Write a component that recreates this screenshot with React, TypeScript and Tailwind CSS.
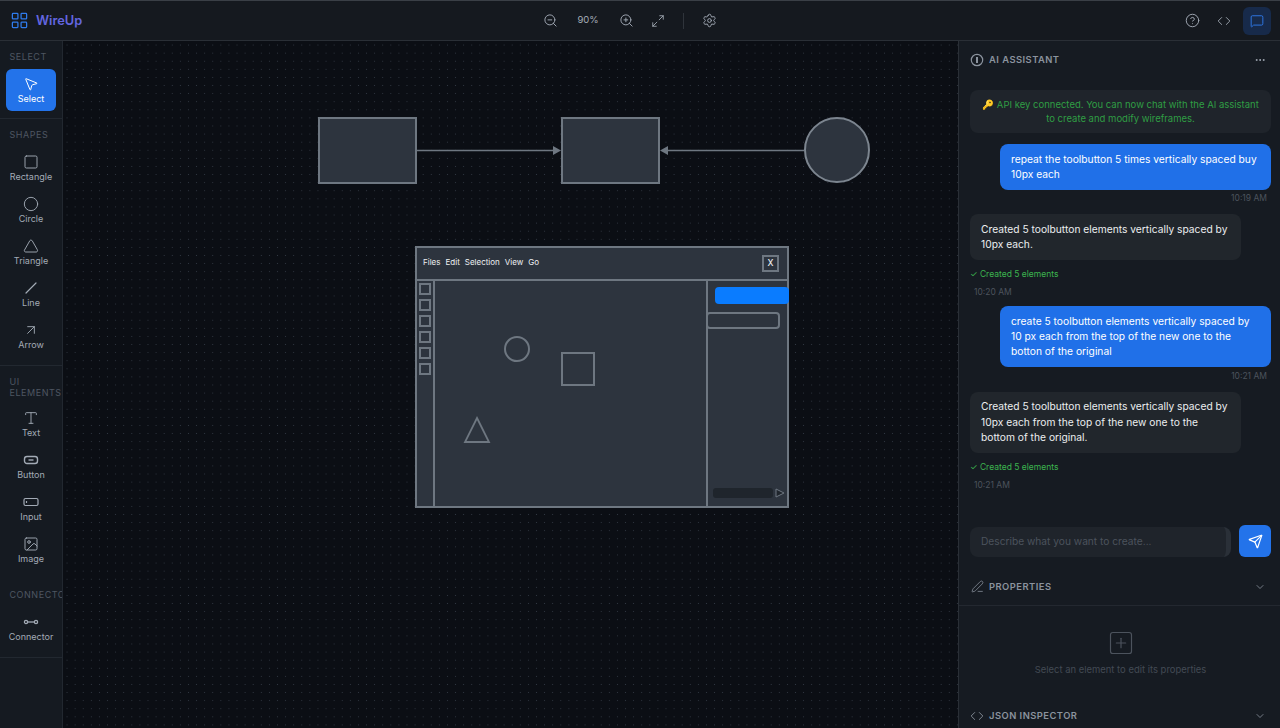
import {
  ArrowUpRight,
  ChevronDown,
  Circle,
  CircleHelp,
  Code,
  Ellipsis,
  Image,
  LayoutGrid,
  Maximize2,
  MessageSquare,
  MousePointer2,
  PenLine,
  Send,
  Settings,
  Square,
  SquarePlus,
  Triangle,
  Type,
  ZoomIn,
  ZoomOut
} from 'lucide-react';
import type { ReactNode } from 'react';

function LineIcon() {
  return (
    <svg width="16" height="16" viewBox="0 0 16 16" fill="none" stroke="currentColor" strokeWidth="1.2" strokeLinecap="round">
      <path d="M3 13 13 3" />
    </svg>
  );
}

function ButtonIcon() {
  return (
    <svg width="16" height="16" viewBox="0 0 16 16" fill="none" stroke="currentColor" strokeWidth="1.4">
      <rect x="1.5" y="4.5" width="13" height="7" rx="2.5" />
      <path d="M5.5 8h5" />
    </svg>
  );
}

function InputIcon() {
  return (
    <svg width="16" height="16" viewBox="0 0 16 16" fill="none" stroke="currentColor" strokeWidth="1.2">
      <rect x="1" y="4.5" width="14" height="7" rx="1.5" />
      <path d="M3.5 7v2" />
    </svg>
  );
}

function ConnectorIcon() {
  return (
    <svg width="16" height="16" viewBox="0 0 16 16" fill="none" stroke="currentColor" strokeWidth="1.3">
      <circle cx="3" cy="8" r="1.6" />
      <circle cx="13" cy="8" r="1.6" />
      <path d="M4.6 8h6.8" />
    </svg>
  );
}

function InfoBarIcon() {
  return (
    <svg width="14" height="14" viewBox="0 0 14 14" fill="none" stroke="currentColor">
      <circle cx="7" cy="7" r="5.7" strokeWidth="1.2" />
      <path d="M7 4v6" strokeWidth="2" />
    </svg>
  );
}

function Tool({ icon, label, active }: { icon: ReactNode; label: string; active?: boolean }) {
  return (
    <div
      className={
        active
          ? 'mx-1.5 flex h-[42px] w-[50px] flex-col items-center justify-center gap-px rounded-md bg-[#2373ea] text-white'
          : 'mx-1.5 flex h-[42px] w-[50px] flex-col items-center justify-center gap-px rounded-md text-[#a3abb6]'
      }
    >
      <div className="flex h-4 items-center justify-center">{icon}</div>
      <span className="text-[9px] leading-3">{label}</span>
    </div>
  );
}

function SectionLabel({ children }: { children: ReactNode }) {
  return <div className="px-[9.5px] text-[9px] leading-[11px] tracking-[0.06em] whitespace-pre-wrap text-[#4e5662]">{children}</div>;
}

function ChatUser({ lines, time }: { lines: string[]; time: string }) {
  return (
    <div className="flex flex-col items-end">
      <div className="w-[271px] rounded-lg bg-[#2070e8] px-[11px] py-[7.5px] text-[10.25px] leading-[15.4px] whitespace-nowrap text-white">
        {lines.map((line) => (
          <div key={line}>{line}</div>
        ))}
      </div>
      <div className="mt-[2.5px] pr-1 text-[8.5px] leading-3 text-[#4c535d]">{time}</div>
    </div>
  );
}

function ChatBot({ lines, time }: { lines: string[]; time: string }) {
  return (
    <div className="flex flex-col items-start">
      <div className="w-[271px] rounded-lg bg-[#21262c] px-[11px] py-[7.5px] text-[10.25px] leading-[15.4px] whitespace-nowrap text-[#eceef0]">
        {lines.map((line) => (
          <div key={line}>{line}</div>
        ))}
      </div>
      <div className="mt-[8px] text-[8.5px] leading-3 text-[#3cb54f]">✓ Created 5 elements</div>
      <div className="mt-[6px] pl-1 text-[8.5px] leading-3 text-[#4c535d]">{time}</div>
    </div>
  );
}

function PanelHeader({ icon, title, right }: { icon: ReactNode; title: string; right: ReactNode }) {
  return (
    <div className="flex items-center justify-between pr-[5px] text-[#8b939e]">
      <div className="flex items-center gap-[5px]">
        <div className="flex w-[14px] justify-center">{icon}</div>
        <span className="text-[9.4px] leading-3 font-semibold tracking-[0.05em]">{title}</span>
      </div>
      {right}
    </div>
  );
}

const shape = 'absolute border-2 border-[#6e7781] bg-[#2d343e]';

function Canvas() {
  return (
    <div className="relative h-full flex-1 overflow-hidden bg-[#0b0e14] bg-[radial-gradient(#323944_0.8px,transparent_0.9px)] bg-[size:8.1px_8.1px]">
      <div className={`${shape} top-[76px] left-[255px] h-[67px] w-[99px]`} />
      <div className={`${shape} top-[76px] left-[498px] h-[67px] w-[99px]`} />
      <div className={`${shape} top-[76px] left-[741px] h-[66px] w-[66px] rounded-full border-[#7c858f]`} />
      <svg className="absolute top-[100px] left-[350px]" width="460" height="20" fill="none">
        <path d="M4 9.5h140M391 9.5H251" stroke="#6e7781" strokeWidth="1.6" />
        <path d="M140 5l8 4.5-8 4.5zM255 5l-8 4.5 8 4.5z" fill="#6e7781" />
      </svg>

      <div className="absolute top-[205px] left-[352px] flex h-[262px] w-[374px] flex-col border-2 border-[#6e7781] bg-[#2d343e]">
        <div className="flex h-[33px] items-center justify-between border-b-2 border-[#6e7781] pr-[8px] pl-[6px]">
          <div className="flex gap-[5px] pb-[3px] text-[8px] text-[#eef0f2]">
            <span>Files</span>
            <span>Edit</span>
            <span>Selection</span>
            <span>View</span>
            <span>Go</span>
          </div>
          <div className="flex h-[17px] w-[17px] items-center justify-center border-2 border-[#6e7781] text-[8.5px] font-medium text-[#eef0f2]">
            X
          </div>
        </div>
        <div className="flex flex-1">
          <div className="flex w-[18px] flex-col items-center gap-[4.2px] border-r-2 border-[#6e7781] pt-[1.5px] pr-[1px]">
            {[0, 1, 2, 3, 4, 5].map((n) => (
              <div key={n} className="h-3 w-3 border-2 border-[#6e7781]" />
            ))}
          </div>
          <div className="relative flex-1">
            <div className="absolute top-[55px] left-[69px] h-[26px] w-[26px] rounded-full border-2 border-[#6e7781]" />
            <div className="absolute top-[71px] left-[126px] h-[34px] w-[34px] border-2 border-[#6e7781]" />
            <svg className="absolute top-[135px] left-[28px]" width="28" height="28" fill="none">
              <path d="M14 2 26 26H2z" stroke="#6e7781" strokeWidth="1.8" />
            </svg>
          </div>
          <div className="relative w-[81px] border-l-2 border-[#6e7781]">
            <div className="absolute top-[6px] right-[-2px] h-[17px] w-[74px] rounded-[4px] bg-[#0a7cff]" />
            <div className="absolute top-[31px] left-[-2px] h-[17px] w-[74px] rounded-[4px] border-2 border-[#6e7781]" />
            <div className="absolute top-[207px] left-[5px] h-[10px] w-[60px] rounded-[3px] bg-[#1f252c]" />
            <svg className="absolute top-[207px] left-[67px]" width="10" height="10">
              <path d="M1 1l8 4-8 4z" fill="#1f252c" stroke="#6e7781" />
            </svg>
          </div>
        </div>
      </div>
    </div>
  );
}

export default function App() {
  return (
    <div className="flex h-[728px] w-[1280px] flex-col overflow-hidden bg-[#0b0e14] font-['Inter',sans-serif]">
      <header className="flex h-[41px] shrink-0 items-center justify-between border-t border-b border-t-[#3a3f46] border-b-[#2a2f36] bg-[#15191f] pr-[9px] pl-[10px]">
        <div className="flex items-center gap-[7px]">
          <LayoutGrid size={19} strokeWidth={1.6} className="text-[#2f7bec]" />
          <span className="text-[12.8px] font-semibold text-[#6366e0]">WireUp</span>
        </div>
        <div className="absolute left-[543px] flex items-center text-[#a3abb6]">
          <ZoomOut size={15} strokeWidth={1.5} />
          <span className="ml-[18px] w-[24px] text-center text-[9.5px]">90%</span>
          <ZoomIn size={15} strokeWidth={1.5} className="ml-[19px]" />
          <Maximize2 size={14} strokeWidth={1.5} className="ml-[17px]" />
          <div className="ml-[18px] h-4 w-px bg-[#2f343b]" />
          <Settings size={15} strokeWidth={1.5} className="ml-[18px]" />
        </div>
        <div className="flex items-center text-[#a3abb6]">
          <CircleHelp size={15} strokeWidth={1.5} />
          <Code size={14} strokeWidth={1.5} className="ml-[17px]" />
          <div className="ml-[12px] flex h-[28px] w-[28px] items-center justify-center rounded-md bg-[#172a4a] text-[#2f7bec]">
            <MessageSquare size={14} strokeWidth={1.6} />
          </div>
        </div>
      </header>

      <div className="flex min-h-0 flex-1">
        <aside className="flex w-[63px] shrink-0 flex-col overflow-hidden border-r border-[#222830] bg-[#151a21] pt-[10px]">
          <SectionLabel>SELECT</SectionLabel>
          <div className="mt-[7px] border-b border-[#222830] pb-[7px]">
            <Tool active icon={<MousePointer2 size={16} strokeWidth={1.5} />} label="Select" />
          </div>
          <div className="mt-[10px]">
            <SectionLabel>SHAPES</SectionLabel>
          </div>
          <div className="mt-[7px] border-b border-[#222830] pb-[8px]">
            <Tool icon={<Square size={16} strokeWidth={1.4} />} label="Rectangle" />
            <Tool icon={<Circle size={16} strokeWidth={1.4} />} label="Circle" />
            <Tool icon={<Triangle size={16} strokeWidth={1.4} />} label="Triangle" />
            <Tool icon={<LineIcon />} label="Line" />
            <Tool icon={<ArrowUpRight size={16} strokeWidth={1.4} />} label="Arrow" />
          </div>
          <div className="mt-[10px]">
            <SectionLabel>{'UI\nELEMENTS'}</SectionLabel>
          </div>
          <div className="mt-[5px] pb-[7px]">
            <Tool icon={<Type size={16} strokeWidth={1.4} />} label="Text" />
            <Tool icon={<ButtonIcon />} label="Button" />
            <Tool icon={<InputIcon />} label="Input" />
            <Tool icon={<Image size={16} strokeWidth={1.4} />} label="Image" />
          </div>
          <div className="mt-[11px]">
            <SectionLabel>
              <span className="whitespace-nowrap">CONNECTOR</span>
            </SectionLabel>
          </div>
          <div className="mt-[7px] border-b border-[#222830] pb-[8px]">
            <Tool icon={<ConnectorIcon />} label="Connector" />
          </div>
        </aside>

        <Canvas />

        <aside className="flex w-[322px] shrink-0 flex-col border-l border-[#2a2f36] bg-[#161b22] pr-[9px] pl-[11px]">
          <div className="pt-[12px]">
            <PanelHeader
              icon={<InfoBarIcon />}
              title="AI ASSISTANT"
              right={<Ellipsis size={12} strokeWidth={2} className="text-[#a3abb6]" />}
            />
          </div>
          <div className="mt-[23px] flex flex-col">
            <div className="rounded-lg bg-[#1f242b] px-3 py-[7.5px] text-center text-[9.5px] leading-[14px] text-[#2f9e44]">
              <div>🔑 API key connected. You can now chat with the AI assistant</div>
              <div>to create and modify wireframes.</div>
            </div>
            <div className="mt-[11px] flex flex-col items-end">
              <div className="w-[271px]">
                <ChatUser lines={['repeat the toolbutton 5 times vertically spaced buy', '10px each']} time="10:19 AM" />
              </div>
            </div>
            <div className="mt-[10px]">
              <ChatBot lines={['Created 5 toolbutton elements vertically spaced by', '10px each.']} time="10:20 AM" />
            </div>
            <div className="mt-[8px] flex justify-end">
              <div className="w-[271px]">
                <ChatUser
                  lines={[
                    'create 5 toolbutton elements vertically spaced by',
                    '10 px each from the top of the new one to the',
                    'botton of the original'
                  ]}
                  time="10:21 AM"
                />
              </div>
            </div>
            <div className="mt-[10px]">
              <ChatBot
                lines={[
                  'Created 5 toolbutton elements vertically spaced by',
                  '10px each from the top of the new one to the',
                  'bottom of the original.'
                ]}
                time="10:21 AM"
              />
            </div>
          </div>

          <div className="mt-[34px] flex items-end gap-2">
            <div className="flex h-[30px] w-[262px] items-center rounded-lg border-r-[5px] border-[#2a3038] bg-[#1f242b] pl-[11px] text-[10.2px] text-[#4c535d]">
              Describe what you want to create...
            </div>
            <div className="flex h-8 w-8 items-center justify-center rounded-md bg-[#2373ea] text-white">
              <Send size={15} strokeWidth={1.9} />
            </div>
          </div>

          <div className="-mx-[11px] -mr-[9px] mt-[23px] border-b border-[#232830] pr-[9px] pb-[12px] pl-[11px]">
            <PanelHeader
              icon={<PenLine size={13} strokeWidth={1.4} />}
              title="PROPERTIES"
              right={<ChevronDown size={12} strokeWidth={1.6} />}
            />
          </div>
          <div className="mt-[23px] flex flex-col items-center">
            <SquarePlus size={28} strokeWidth={1} className="text-[#4c535d]" />
            <div className="mt-[7px] text-[9.45px] leading-3 text-[#434a54]">Select an element to edit its properties</div>
          </div>
          <div className="mt-[33px]">
            <PanelHeader
              icon={<Code size={14} strokeWidth={1.5} />}
              title="JSON INSPECTOR"
              right={<ChevronDown size={12} strokeWidth={1.6} />}
            />
          </div>
        </aside>
      </div>
    </div>
  );
}
